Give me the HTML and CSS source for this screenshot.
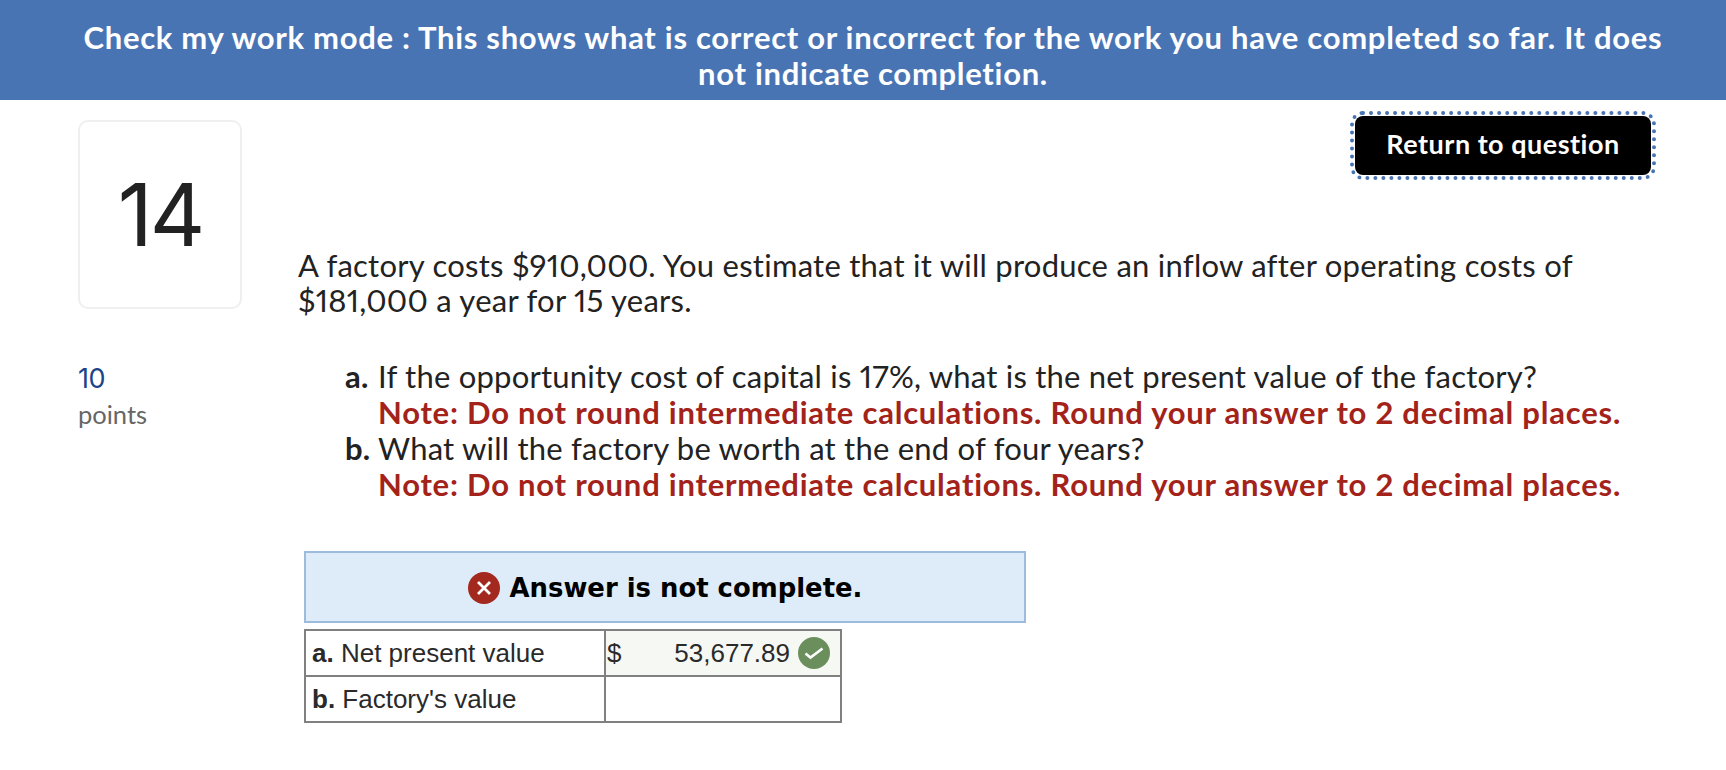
FILE: index.html
```html
<!DOCTYPE html>
<html lang="en">
	<head>
		<meta charset="UTF-8" />
		<title>Check my work</title>
		<link rel="stylesheet" href="styles.css">
	</head>
	<body>
		<div class="banner">Check my work mode : This shows what is correct or incorrect for the work you have completed so far. It does not indicate completion.</div>

		<div class="main">
			<div class="side">
				<div class="number-box">14</div>
				<div class="points-value">10</div>
				<div class="points-label">points</div>
			</div>

			<div class="content">
				<div class="button-row">
					<button class="return-btn">Return to question</button>
				</div>

				<p class="question">A factory costs $910,000. You estimate that it will produce an inflow after operating costs of $181,000 a year for 15 years.</p>

				<div class="parts">
					<b>a.</b>
					<div>If the opportunity cost of capital is 17%, what is the net present value of the factory?<br><span class="note">Note: Do not round intermediate calculations. Round your answer to 2 decimal places.</span></div>
					<b>b.</b>
					<div>What will the factory be worth at the end of four years?<br><span class="note">Note: Do not round intermediate calculations. Round your answer to 2 decimal places.</span></div>
				</div>

				<div class="message">
					<svg class="status-icon" viewBox="0 0 32 32">
						<circle cx="16" cy="16" r="16" fill="#a3281e" />
						<path d="M10 10 L22 22 M22 10 L10 22" stroke="#fff" stroke-width="2.8" />
					</svg>
					<span>Answer is not complete.</span>
				</div>

				<table class="answers">
					<tr>
						<td class="label"><b>a.</b> Net present value</td>
						<td class="value correct">
							<div class="value-inner">
								<span>$</span>
								<span class="amount">53,677.89</span>
								<svg class="status-icon" viewBox="0 0 32 32">
									<circle cx="16" cy="16" r="16" fill="#6b8f5c" />
									<path d="M7.5 16.5 L12.5 20.5 L24.5 11.5" fill="none" stroke="#fff" stroke-width="2.6" />
								</svg>
							</div>
						</td>
					</tr>
					<tr>
						<td class="label"><b>b.</b> Factory's value</td>
						<td class="value"></td>
					</tr>
				</table>
			</div>
		</div>
	</body>
</html>
```

FILE: styles.css
```css
body {
	margin: 0;
	font-family: Lato, "Open Sans", sans-serif;
	font-variant-ligatures: none;
	font-variant-numeric: proportional-nums;
	color: #222;
	background-color: #fff;
}

.banner {
	box-sizing: border-box;
	height: 100px;
	padding: 19px 50px 0 70px;
	background-color: #4974b4;
	color: #fff;
	font-size: 31px;
	font-weight: 700;
	letter-spacing: 0.7px;
	line-height: 36px;
	text-align: center;
}

.main {
	display: flex;
	padding-left: 78px;
}

.side {
	width: 220px;
	flex-shrink: 0;
	padding-top: 20px;
}

.number-box {
	box-sizing: border-box;
	width: 164px;
	height: 189px;
	display: flex;
	align-items: center;
	justify-content: center;
	border: 2px solid #efefef;
	border-radius: 10px;
	font-family: Inter, sans-serif;
	font-size: 86px;
	letter-spacing: -3px;
	color: #222;
}

.points-value {
	margin-top: 52px;
	font-family: Inter, sans-serif;
	font-size: 27px;
	letter-spacing: -0.5px;
	line-height: 36px;
	color: #1c4587;
}

.points-label {
	margin-top: -1px;
	font-size: 25.5px;
	line-height: 36px;
	color: #666;
}

.content {
	flex: 1;
	padding-right: 75px;
}

.button-row {
	display: flex;
	justify-content: flex-end;
	padding-top: 16px;
}

.return-btn {
	width: 296px;
	height: 59px;
	padding: 0 0 5px;
	background-color: #000;
	color: #fff;
	border: none;
	border-radius: 8px;
	outline: 4px dotted #4974b4;
	outline-offset: 1px;
	font-family: Lato, sans-serif;
	font-size: 27px;
	font-weight: 700;
	letter-spacing: 0.5px;
}

.question {
	margin: 73px 0 0;
	width: 1300px;
	font-size: 31px;
	letter-spacing: 0.25px;
	line-height: 34.5px;
}

.parts {
	display: grid;
	grid-template-columns: 33px 1fr;
	margin-top: 41px;
	padding-left: 47px;
	font-size: 31px;
	letter-spacing: 0.22px;
	line-height: 36px;
}

.note {
	color: #a3231a;
	font-weight: 700;
	letter-spacing: 0.77px;
}

.message {
	box-sizing: border-box;
	display: flex;
	align-items: center;
	justify-content: center;
	gap: 10px;
	width: 722px;
	height: 72px;
	margin: 49px 0 0 6px;
	padding-top: 2px;
	background-color: #deebf8;
	border: 2px solid #9dbcdd;
	font-family: "DejaVu Sans", sans-serif;
	font-size: 25.9px;
	font-weight: 700;
	color: #000;
}

.status-icon {
	width: 32px;
	height: 32px;
	flex-shrink: 0;
}

.answers {
	margin: 6px 0 0 6px;
	border-collapse: collapse;
	font-family: "Liberation Sans", Arial, sans-serif;
	font-size: 26px;
	color: #2a2a2a;
}

.answers td {
	height: 46px;
	padding: 0;
	border: 2px solid #808080;
}

.label {
	box-sizing: border-box;
	width: 300px;
	padding-left: 6px !important;
}

.value {
	box-sizing: border-box;
	width: 236px;
}

.correct {
	background-color: #f6f8f3;
}

.value-inner {
	display: flex;
	align-items: center;
	padding: 0 10px 0 1px;
}

.amount {
	margin-left: auto;
	margin-right: 8px;
}
```
